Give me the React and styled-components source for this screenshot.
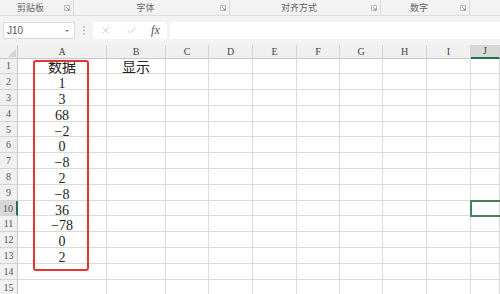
import React from "react";
import styled, { createGlobalStyle } from "styled-components";
import { X, Check } from "lucide-react";

const HEAD_H = 13.5;
const ROW_H = 15.8;

const GlobalStyle = createGlobalStyle`
  body {
    margin: 0;
    font-family: "Liberation Sans", "Noto Sans CJK SC", sans-serif;
  }
`;

const Page = styled.div`
  width: 500px;
  height: 294px;
  overflow: hidden;
  background: #f3f3f3;
  display: flex;
  flex-direction: column;
`;

const Ribbon = styled.div`
  height: 15px;
  display: flex;
  border-bottom: 1px solid #dcdcdc;
  flex-shrink: 0;
`;

const Group = styled.div`
  width: ${(p) => p.w}px;
  flex-shrink: 0;
  display: flex;
  align-items: center;
  border-right: ${(p) => (p.last ? "none" : "1px solid #dadada")};
  box-sizing: border-box;
`;

const GroupLabel = styled.span`
  flex: 1;
  text-align: center;
  font-size: 9px;
  color: #666;
  font-family: "Noto Sans CJK SC", sans-serif;
  line-height: 15px;
`;

const Launcher = styled.span`
  width: 12px;
  display: flex;
  justify-content: center;
  align-items: center;
`;

const FormulaBar = styled.div`
  height: 29px;
  display: flex;
  align-items: center;
  padding-left: 3px;
  flex-shrink: 0;
`;

const NameBox = styled.div`
  width: 72px;
  height: 17px;
  box-sizing: border-box;
  background: #fff;
  border: 1px solid #dcdcdc;
  display: flex;
  align-items: center;
  justify-content: space-between;
  padding: 0 5px 0 3px;
  font-size: 10px;
  color: #555;
`;

const Caret = styled.span`
  width: 0;
  height: 0;
  border-left: 2px solid transparent;
  border-right: 2px solid transparent;
  border-top: 2px solid #777;
`;

const Dots = styled.div`
  width: 18px;
  display: flex;
  justify-content: center;
`;

const ButtonBox = styled.div`
  width: 74px;
  height: 17px;
  background: #fff;
  display: flex;
  align-items: center;
  justify-content: space-around;
  color: #b8b8b8;
`;

const Fx = styled.span`
  font-family: "Liberation Serif", serif;
  font-style: italic;
  font-size: 12px;
  color: #555;
`;

const FormulaInput = styled.div`
  flex: 1;
  height: 17px;
  margin-left: 3px;
  background: #fff;
`;

const SheetWrap = styled.div`
  position: relative;
  flex: 1;
  background: #fff;
`;

const Sheet = styled.div`
  display: grid;
  grid-template-columns: 18px 89px 59px 43px 44px 44px 43px 43px 44px 44px 1fr;
  grid-template-rows: ${HEAD_H}px repeat(15, ${ROW_H}px);
`;

const Corner = styled.div`
  background: #f0f0f0;
  border-right: 1px solid #c8c8c8;
  border-bottom: 1px solid #c8c8c8;
  box-sizing: border-box;
  position: relative;
  overflow: hidden;
  &::after {
    content: "";
    position: absolute;
    right: 1px;
    bottom: 1px;
    border-left: 8px solid transparent;
    border-bottom: 8px solid #d3d3d3;
  }
`;

const ColHead = styled.div`
  background: ${(p) => (p.active ? "#d8d8d8" : "#f0f0f0")};
  border-right: 1px solid #d4d4d4;
  border-bottom: ${(p) => (p.active ? "2px solid #217346" : "1px solid #c8c8c8")};
  box-sizing: border-box;
  font-family: "Liberation Serif", serif;
  font-size: 10px;
  color: #444;
  display: flex;
  justify-content: center;
  align-items: center;
`;

const RowHead = styled.div`
  background: ${(p) => (p.active ? "#d8d8d8" : "#f0f0f0")};
  border-right: ${(p) => (p.active ? "2px solid #217346" : "1px solid #c8c8c8")};
  border-bottom: 1px solid #d4d4d4;
  box-sizing: border-box;
  font-family: "Liberation Serif", serif;
  font-size: 10px;
  color: #555;
  display: flex;
  justify-content: center;
  align-items: center;
`;

const Cell = styled.div`
  border-right: 1px solid #dadada;
  border-bottom: 1px solid #dadada;
  box-sizing: border-box;
  font-family: "Liberation Serif", "Noto Sans CJK SC", serif;
  font-size: 14px;
  color: #222;
  display: flex;
  justify-content: center;
  align-items: center;
  line-height: 1;
  padding-top: 5px;
`;

const RedBox = styled.div`
  position: absolute;
  left: 33px;
  top: 15px;
  width: 56px;
  height: 211px;
  box-sizing: border-box;
  border: 2px solid #e5332f;
  border-radius: 3px;
`;

const Selection = styled.div`
  position: absolute;
  left: 470px;
  top: ${HEAD_H + 9 * ROW_H - 1}px;
  width: 40px;
  height: ${ROW_H + 2}px;
  box-sizing: border-box;
  border: 2px solid #4a7d5a;
`;

const groups = [
  { label: "剪贴板", w: 74 },
  { label: "字体", w: 156 },
  { label: "对齐方式", w: 151 },
  { label: "数字", w: 89 },
];

const cols = ["A", "B", "C", "D", "E", "F", "G", "H", "I", "J"];
const data = ["数据", "1", "3", "68", "-2", "0", "-8", "2", "-8", "36", "-78", "0", "2"];

const LaunchIcon = () => (
  <svg width="6" height="6" viewBox="0 0 6 6">
    <path d="M0.5 0.5h5v5h-5z" fill="none" stroke="#999" strokeWidth="0.6" />
    <path d="M2 2l3 3M3.5 5H5V3.5" fill="none" stroke="#777" strokeWidth="0.7" />
  </svg>
);

const App = () => {
  const rows = [];
  for (let r = 1; r <= 15; r++) {
    rows.push(
      <RowHead key={`h${r}`} active={r === 10}>
        {r}
      </RowHead>
    );
    cols.forEach((c) => {
      let text = "";
      if (c === "A" && data[r - 1]) text = data[r - 1];
      if (c === "B" && r === 1) text = "显示";
      rows.push(<Cell key={`${c}${r}`}>{text.replace("-", "\u2212")}</Cell>);
    });
  }

  return (
    <Page>
      <GlobalStyle />
      <Ribbon>
        {groups.map((g) => (
          <Group key={g.label} w={g.w}>
            <GroupLabel>{g.label}</GroupLabel>
            <Launcher>
              <LaunchIcon />
            </Launcher>
          </Group>
        ))}
        <Group w={30} last />
      </Ribbon>
      <FormulaBar>
        <NameBox>
          J10
          <Caret />
        </NameBox>
        <Dots>
          <svg width="2" height="9" viewBox="0 0 2 9">
            <circle cx="1" cy="1" r="0.8" fill="#999" />
            <circle cx="1" cy="4.5" r="0.8" fill="#999" />
            <circle cx="1" cy="8" r="0.8" fill="#999" />
          </svg>
        </Dots>
        <ButtonBox>
          <X size={11} strokeWidth={1.4} />
          <Check size={11} strokeWidth={1.4} />
          <Fx>fx</Fx>
        </ButtonBox>
        <FormulaInput />
      </FormulaBar>
      <SheetWrap>
        <Sheet>
          <Corner />
          {cols.map((c) => (
            <ColHead key={c} active={c === "J"}>
              {c}
            </ColHead>
          ))}
          {rows}
        </Sheet>
        <RedBox />
        <Selection />
      </SheetWrap>
    </Page>
  );
};

export default App;
